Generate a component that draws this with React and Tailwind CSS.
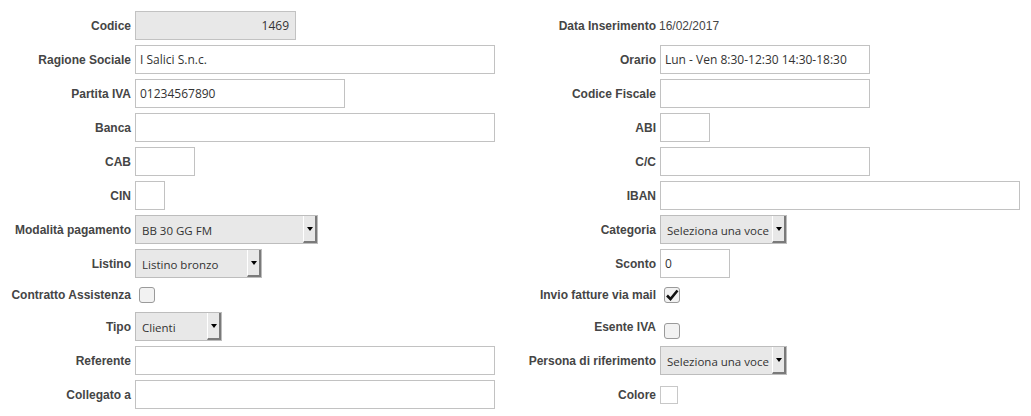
const labelCls =
  "w-[131px] shrink-0 text-right font-bold text-[12px] text-[#454545] font-['Liberation_Sans',sans-serif]";

function Row({ label, children, h = "h-[29px]" }) {
  return (
    <div className={`flex items-center ${h}`}>
      <div className={labelCls}>{label}</div>
      <div className="ml-[4px] flex items-center">{children}</div>
    </div>
  );
}

function TextBox({ w, value, disabled }) {
  return (
    <div
      className={`flex h-[29px] items-center whitespace-nowrap border border-[#c2c2c2] px-[4px] font-['Open_Sans',sans-serif] text-[12px] text-[#333] ${
        disabled ? "bg-[#e8e8e8] justify-end pr-[6px]" : "bg-white"
      }`}
      style={{ width: w }}
    >
      {value}
    </div>
  );
}

function Select({ w, value }) {
  return (
    <div
      className="flex h-[29px] items-stretch border border-[#bdbdbd] bg-[#e8e8e8] font-['Open_Sans',sans-serif] text-[11.5px] text-[#333]"
      style={{ width: w }}
    >
      <div className="flex flex-1 items-center overflow-hidden whitespace-nowrap pl-[6px] pt-[2px]">{value}</div>
      <div className="flex w-[14px] shrink-0 items-center justify-center border-l border-l-white border-r-2 border-r-[#7a7a7a] border-b-2 border-b-[#7a7a7a]">
        <div className="h-0 w-0 border-l-[3px] border-r-[3px] border-t-[4px] border-l-transparent border-r-transparent border-t-black" />
      </div>
    </div>
  );
}

function Check({ checked, className = "" }) {
  return (
    <div
      className={`ml-[4px] flex h-[16px] w-[16px] items-center justify-center rounded-[3px] border border-[#9a9a9a] bg-[#f2f2f2] ${className}`}
    >
      {checked && (
        <svg width="14" height="14" viewBox="0 0 14 14">
          <path d="M2 7.5 L5.5 11 L12.5 2.5" fill="none" stroke="#111" strokeWidth="2.6" strokeLinejoin="miter" />
        </svg>
      )}
    </div>
  );
}

export default function App() {
  return (
    <div className="flex bg-white pt-[11px] w-[1031px] h-[416px]">
      <div className="flex w-[525px] shrink-0 flex-col gap-[5px]">
        <Row label="Codice">
          <TextBox w={161} value="1469" disabled />
        </Row>
        <Row label="Ragione Sociale">
          <TextBox w={360} value="I Salici S.n.c." />
        </Row>
        <Row label="Partita IVA">
          <TextBox w={210} value="01234567890" />
        </Row>
        <Row label="Banca">
          <TextBox w={360} value="" />
        </Row>
        <Row label="CAB">
          <TextBox w={60} value="" />
        </Row>
        <Row label="CIN">
          <TextBox w={30} value="" />
        </Row>
        <Row label="Modalità pagamento">
          <Select w={183} value="BB 30 GG FM" />
        </Row>
        <Row label="Listino">
          <Select w={127} value="Listino bronzo" />
        </Row>
        <Row label="Contratto Assistenza" h="h-[24px]">
          <Check />
        </Row>
        <Row label="Tipo">
          <Select w={87} value="Clienti" />
        </Row>
        <Row label="Referente">
          <TextBox w={360} value="" />
        </Row>
        <Row label="Collegato a">
          <TextBox w={360} value="" />
        </Row>
      </div>
      <div className="flex flex-1 flex-col gap-[5px]">
        <div className="flex h-[29px] items-center">
          <div className={labelCls}>Data Inserimento</div>
          <div className="ml-[3px] text-[12px] text-[#454545] font-['Liberation_Sans',sans-serif]">16/02/2017</div>
        </div>
        <Row label="Orario">
          <TextBox w={210} value="Lun - Ven 8:30-12:30 14:30-18:30" />
        </Row>
        <Row label="Codice Fiscale">
          <TextBox w={210} value="" />
        </Row>
        <Row label="ABI">
          <TextBox w={50} value="" />
        </Row>
        <Row label="C/C">
          <TextBox w={210} value="" />
        </Row>
        <Row label="IBAN">
          <TextBox w={360} value="" />
        </Row>
        <Row label="Categoria">
          <Select w={127} value="Seleziona una voce" />
        </Row>
        <Row label="Sconto">
          <TextBox w={70} value="0" />
        </Row>
        <Row label="Invio fatture via mail" h="h-[24px]">
          <Check checked />
        </Row>
        <Row label="Esente IVA">
          <Check className="mt-[8px]" />
        </Row>
        <Row label="Persona di riferimento">
          <Select w={127} value="Seleziona una voce" />
        </Row>
        <Row label="Colore">
          <div className="h-[18px] w-[18px] border border-[#c8c8c8] bg-white" />
        </Row>
      </div>
    </div>
  );
}
